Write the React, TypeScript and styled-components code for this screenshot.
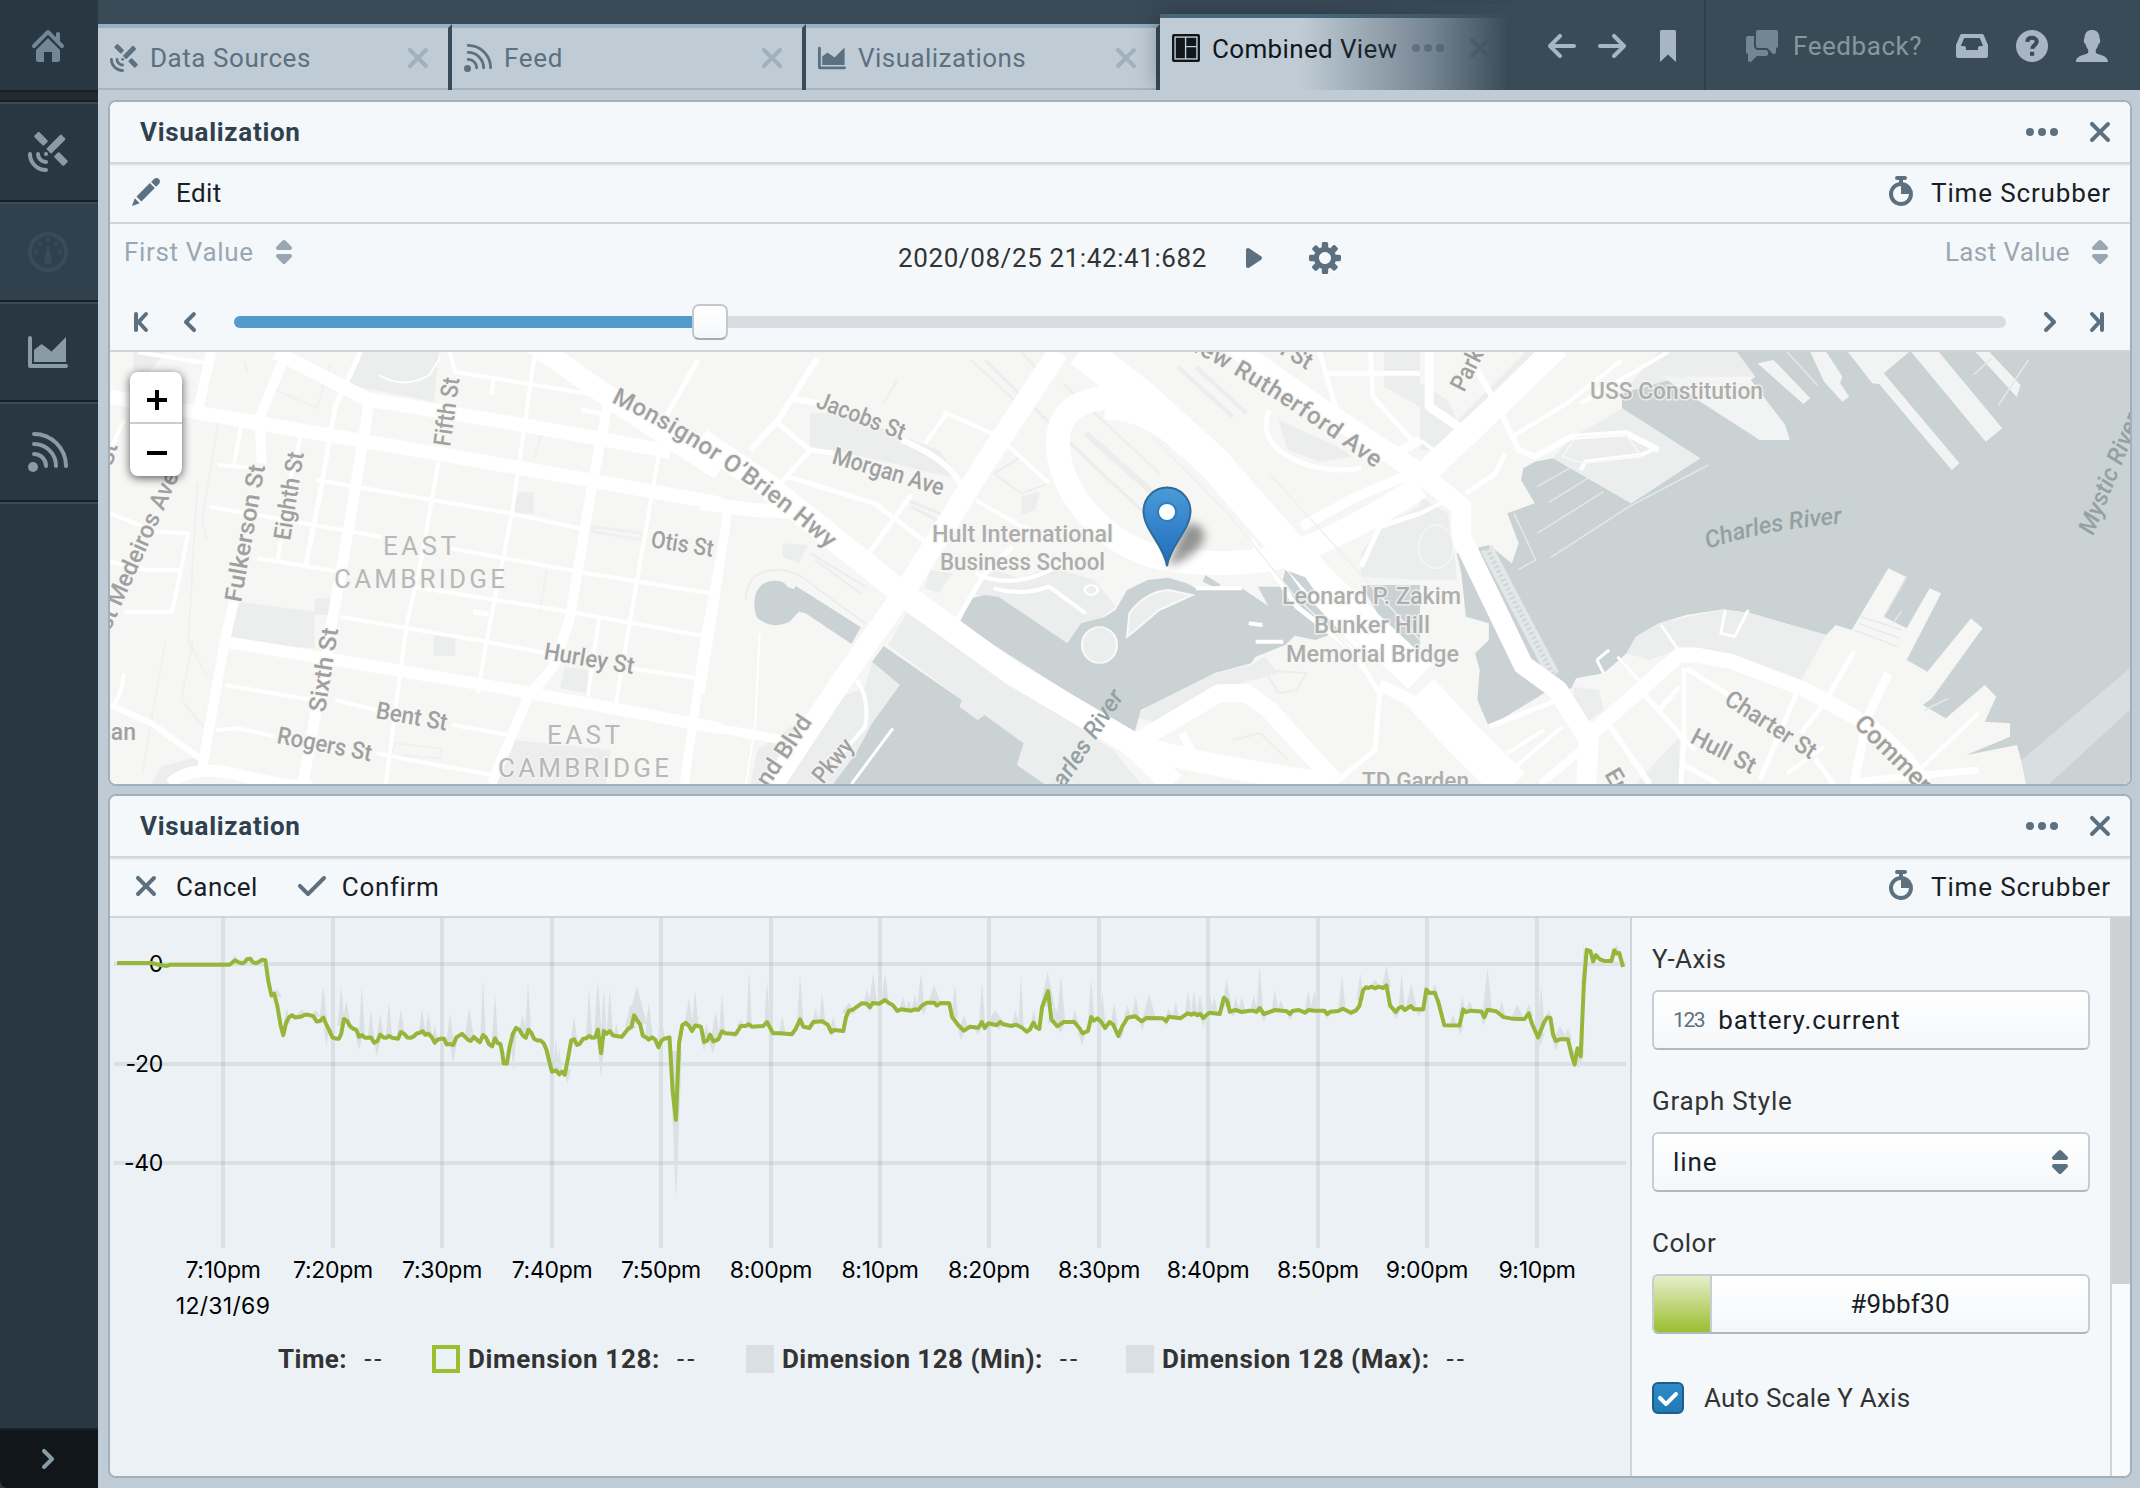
import React from 'react';
import styled, { createGlobalStyle, css } from 'styled-components';

const GlobalStyle = createGlobalStyle`
  * { box-sizing: border-box; }
  body {
    margin: 0;
    background: #bfccd6;
    font-family: Roboto, "Liberation Sans", sans-serif;
    font-size: 26px;
    line-height: 30px;
    color: #182026;
  }
`;

/* ---------- icons ---------- */

const Svg = styled.svg<{ $size?: number; $color?: string; $opacity?: number }>`
  display: block;
  flex: none;
  width: ${p => p.$size ?? 32}px;
  height: ${p => p.$size ?? 32}px;
  color: ${p => p.$color ?? '#5c7080'};
  fill: currentColor;
  opacity: ${p => p.$opacity ?? 1};
  overflow: visible;
`;

type IconName = keyof typeof glyphs;

const stroke = (w: number) => ({
  fill: 'none',
  stroke: 'currentColor',
  strokeWidth: w,
  strokeLinecap: 'round' as const,
  strokeLinejoin: 'round' as const,
});

const glyphs = {
  home: <path d="M2 10v5c0 .55.45 1 1 1h3v-5h4v5h3c.55 0 1-.45 1-1v-5L8 4l-6 6zm13.71-2.71L14 5.59V2c0-.55-.45-1-1-1s-1 .45-1 1v1.59L8.71.29C8.53.11 8.28 0 8 0s-.53.11-.71.29l-7 7a1.003 1.003 0 001.42 1.42L8 2.41l6.29 6.29c.18.18.43.3.71.3a1.003 1.003 0 00.71-1.71z" />,
  cross: <path d="M9.41 8l3.29-3.29c.19-.18.3-.43.3-.71a1.003 1.003 0 00-1.71-.71L8 6.59l-3.29-3.3a1.003 1.003 0 00-1.42 1.42L6.59 8 3.3 11.29c-.19.18-.3.43-.3.71a1.003 1.003 0 001.71.71L8 9.41l3.29 3.29c.18.19.43.3.71.3a1.003 1.003 0 00.71-1.71L9.41 8z" />,
  tick: <path d="M14 3c-.28 0-.53.11-.71.29L6 10.59l-3.29-3.3a1.003 1.003 0 00-1.42 1.42l4 4c.18.18.43.29.71.29s.53-.11.71-.29l8-8A1.003 1.003 0 0014 3z" />,
  caret: <path d="M5 7h6a1.003 1.003 0 00.71-1.71l-3-3C8.53 2.11 8.28 2 8 2s-.53.11-.71.29l-3 3A1.003 1.003 0 005 7zm6 2H5a1.003 1.003 0 00-.71 1.71l3 3c.18.18.43.29.71.29s.53-.11.71-.29l3-3A1.003 1.003 0 0011 9z" />,
  play: <path d="M12 8c0-.35-.19-.64-.46-.82l.01-.02-6-4-.01.02A.969.969 0 005 3c-.55 0-1 .45-1 1v8c0 .55.45 1 1 1 .21 0 .39-.08.54-.18l.01.02 6-4-.01-.02c.27-.18.46-.47.46-.82z" />,
  cog: <path d="M15.19 6.39h-1.85c-.11-.37-.27-.71-.45-1.04l1.36-1.36c.31-.31.31-.82 0-1.13l-1.13-1.13c-.31-.31-.82-.31-1.13 0l-1.36 1.36c-.33-.17-.67-.33-1.04-.44V.79c0-.44-.36-.8-.8-.8h-1.6c-.44 0-.8.36-.8.8v1.86c-.39.12-.75.28-1.1.47l-1.3-1.3c-.3-.3-.79-.3-1.09 0L1.82 2.91c-.3.3-.3.79 0 1.09l1.3 1.3c-.2.34-.36.7-.48 1.09H.79c-.44 0-.8.36-.8.8v1.6c0 .44.36.8.8.8h1.85c.11.37.27.71.45 1.04l-1.36 1.36c-.31.31-.31.82 0 1.13l1.13 1.13c.31.31.82.31 1.13 0l1.36-1.36c.33.18.67.33 1.04.44v1.86c0 .44.36.8.8.8h1.6c.44 0 .8-.36.8-.8v-1.86c.39-.12.75-.28 1.1-.47l1.3 1.3c.3.3.79.3 1.09 0l1.09-1.09c.3-.3.3-.79 0-1.09l-1.3-1.3c.19-.35.36-.71.48-1.1h1.85c.44 0 .8-.36.8-.8v-1.6a.816.816 0 00-.81-.79zm-7.2 4.6c-1.66 0-3-1.34-3-3s1.34-3 3-3 3 1.34 3 3-1.34 3-3 3z" />,
  left: <path d="M7.41 8l3.29-3.29A1.003 1.003 0 009.29 3.29l-4 4c-.18.18-.29.43-.29.71s.11.53.29.71l4 4a1.003 1.003 0 001.42-1.42L7.41 8z" />,
  right: <path d="M10.71 7.29l-4-4a1.003 1.003 0 00-1.42 1.42L8.59 8 5.3 11.29c-.19.18-.3.43-.3.71a1.003 1.003 0 001.71.71l4-4c.18-.18.29-.43.29-.71 0-.28-.11-.53-.29-.71z" />,
  first: <g {...stroke(2)}><path d="M6 4v8" /><path d="M11 4L7.300 8 11 12" /></g>,
  last: <g {...stroke(2)}><path d="M11 4v8" /><path d="M6 4l3.700 4L6 12" /></g>,
  more: <g><circle cx="2" cy="8" r="2" /><circle cx="8" cy="8" r="2" /><circle cx="14" cy="8" r="2" /></g>,
  stopwatch: <path d="M9 2v1.083A6.002 6.002 0 018 15 6 6 0 017 3.083V2H6a1 1 0 110-2h4a1 1 0 010 2H9zM8 5a4 4 0 104 4H8V5z" />,
  edit: <path d="M3.25 10.26l2.47 2.47 6.69-6.69-2.46-2.48-6.7 6.7zM.99 14.99l3.86-1.39-2.46-2.44L.99 14.99zm12.25-14c-.48 0-.92.2-1.24.51l-1.44 1.44 2.47 2.47 1.44-1.44c.32-.32.51-.75.51-1.24.01-.95-.77-1.74-1.74-1.74z" />,
  arrowLeft: <path d="M13.99 6.99H4.41L7.7 3.7a1.003 1.003 0 00-1.42-1.42l-5 5a1.014 1.014 0 000 1.42l5 5a1.003 1.003 0 001.42-1.42L4.41 8.99H14c.55 0 1-.45 1-1s-.46-1-1.01-1z" />,
  arrowRight: <path transform="matrix(-1 0 0 1 16 0)" d="M13.99 6.99H4.41L7.7 3.7a1.003 1.003 0 00-1.42-1.42l-5 5a1.014 1.014 0 000 1.42l5 5a1.003 1.003 0 001.42-1.42L4.41 8.99H14c.55 0 1-.45 1-1s-.46-1-1.01-1z" />,
  bookmark: <path d="M11.2.01H4.8c-.44 0-.8.34-.8.78v15.22l4-3.7 4 3.7V.79c0-.43-.36-.78-.8-.78z" />,
  chat: <path d="M6 10c-1.1 0-2-.9-2-2V3H1c-.55 0-1 .45-1 1v7c0 .55.45 1 1 1v3c0 .55.45 1 1 1 .28 0 .53-.11.71-.29L5.41 13H10c.55 0 1-.45 1-1v-1.17l-.83-.83H6zm9-10H6c-.55 0-1 .45-1 1v7c0 .55.45 1 1 1h4.59l2.7 2.71c.19.18.44.29.71.29.55 0 1-.45 1-1V9c.55 0 1-.45 1-1V1c0-.55-.45-1-1-1z" />,
  inbox: <path d="M13.91 2.6c-.16-.36-.51-.61-.92-.61h-10c-.41 0-.77.25-.92.61L-.01 7.45v5.54c0 .55.45 1 1 1h14c.55 0 1-.45 1-1V7.45L13.91 2.6zM11.99 8c-.55 0-1 .45-1 1v1h-6V9c0-.55-.45-1-1-1H2.4l1.71-4h7.76l1.71 4h-1.59z" />,
  help: (
    <g>
      <circle cx="8" cy="8" r="8" />
      <path d="M5.6 5.9C5.7 4.6 6.7 3.9 8 3.9s2.4.7 2.4 1.9c0 1.7-2.2 1.8-2.3 3.6" fill="none" stroke="#394b59" strokeWidth="2" />
      <rect x="7" y="10.9" width="2.1" height="2" fill="#394b59" />
    </g>
  ),
  person: <path d="M8 0C5.9 0 4.5 1.3 4.3 3.4c0 .9-.5 1.3-.4 2.3.1.8.6 1 .9 1.5.3 1.2.8 2 1.3 2.7v1.4C5.700 12.600 0 12.300 0 16h16c0-3.700-5.700-3.400-6.100-4.700V9.900c.5-.7 1-1.500 1.300-2.700.3-.5.8-.7.9-1.500.1-1-.4-1.400-.4-2.300C11.500 1.300 10.100 0 8 0z" />,
};

const glyphs20 = {
  satellite: (
    <g>
      <rect x="3.1" y="1.6" width="6.8" height="3.5" rx=".6" transform="rotate(45 6.5 3.350)" />
      <rect x="8.8" y="4.25" width="10.4" height="3.5" rx=".6" transform="rotate(-45 14 6)" />
      <rect x="13.100" y="11.750" width="6.800" height="3.500" rx=".6" transform="rotate(45 16.500 13.500)" />
      <circle cx="9" cy="11" r="1" />
      <g {...stroke(2)}>
        <path d="M1 11a8 8 0 008 8" />
        <path d="M5 11a4 4 0 004 4" />
      </g>
    </g>
  ),
  gauge: (
    <g>
      <circle cx="10" cy="10" r="9" fill="none" stroke="currentColor" strokeWidth="2" />
      <path d="M10 6l-1.900 7.600a2 2 0 103.800 0z" />
      <circle cx="4" cy="10" r="1" />
      <circle cx="6" cy="6" r="1" />
      <circle cx="10" cy="4" r="1" />
      <circle cx="14" cy="6" r="1" />
      <circle cx="16" cy="10" r="1" />
    </g>
  ),
  area: (
    <g>
      <path d="M1 3v14h18" {...stroke(2)} />
      <path d="M3 15V9l3.800-3 5 3.700L19 2.500V15z" />
    </g>
  ),
  feed: (
    <g>
      <circle cx="2.500" cy="17.500" r="2.500" />
      <g {...stroke(2)}>
        <path d="M3 1a16 16 0 0116 16" />
        <path d="M3 6a11 11 0 0111 11" />
        <path d="M3 11a6 6 0 016 6" />
      </g>
    </g>
  ),
  layout: (
    <g>
      <rect width="20" height="20" rx="1.400" />
      <rect x="2.200" y="2.200" width="15.600" height="15.600" fill="none" stroke="#bfccd6" strokeWidth="1" />
      <path d="M9.700 2.200v15.600M9.700 9h8" fill="none" stroke="#bfccd6" strokeWidth="1" />
    </g>
  ),
};

interface IconProps {
  name: IconName;
  color?: string;
  size?: number;
  opacity?: number;
}
const Icon = ({ name, color, size, opacity }: IconProps) => (
  <Svg viewBox="0 0 16 16" $color={color} $size={size} $opacity={opacity}>{glyphs[name]}</Svg>
);
const NavIcon = ({ name, color, size = 40 }: { name: keyof typeof glyphs20; color?: string; size?: number }) => (
  <Svg viewBox="0 0 20 20" $color={color} $size={size}>{glyphs20[name]}</Svg>
);

/* ---------- frame ---------- */

const Frame = styled.div`
  display: flex;
  width: 2140px;
  height: 1488px;
  overflow: hidden;
`;

const Sidebar = styled.nav`
  display: flex;
  flex-direction: column;
  flex: none;
  width: 98px;
  background: #293742;
`;

const HomeCell = styled.div`
  display: flex;
  align-items: center;
  justify-content: center;
  height: 90px;
  padding-top: 2px;
  padding-right: 2px;
`;

const SidebarGap = styled.div`
  height: 12px;
  background: #202b33;
  border-top: 2px solid #182026;
  border-bottom: 2px solid #182026;
`;

const NavCell = styled.div<{ $active?: boolean }>`
  display: flex;
  align-items: center;
  justify-content: center;
  height: 100px;
  padding-right: 2px;
  border-top: 2px solid #394b59;
  border-bottom: 2px solid #182026;
  background: ${p => (p.$active ? '#30404d' : 'transparent')};
`;

const NavEnd = styled.div`
  height: 2px;
  background: #394b59;
`;

const Expand = styled.div`
  display: flex;
  align-items: center;
  justify-content: center;
  margin-top: auto;
  height: 60px;
  padding-right: 2px;
  border-top: 2px solid #182026;
  background: #10161a;
  border-bottom-left-radius: 8px;
`;

const Main = styled.div`
  display: flex;
  flex-direction: column;
  width: 2042px;
`;

const TopBar = styled.header`
  display: flex;
  align-items: flex-end;
  height: 90px;
  overflow: hidden;
  background: #3a4b58;
`;

const Label = styled.span<{ $ls?: number; $w?: number; $color?: string }>`
  letter-spacing: ${p => p.$ls ?? 0.45}px;
  font-weight: ${p => p.$w ?? 400};
  color: ${p => p.$color ?? '#182026'};
  white-space: nowrap;
`;

const Tab = styled.div`
  display: flex;
  align-items: center;
  gap: 12px;
  flex: none;
  width: 354px;
  height: 66px;
  padding: 0 14px 2px 12px;
  border-top: 4px solid #97b0c6;
  border-right: 4px solid #394b59;
  background: #bfccd6;
  box-shadow: inset 0 -2px 0 #a6b5c2;
  svg:last-child { margin-left: auto; }
`;

const ActiveTab = styled.div`
  display: flex;
  align-items: flex-start;
  position: relative;
  flex: none;
  width: 346px;
  height: 76px;
  padding: 16px 0 0 12px;
  border-top: 4px solid #48677b;
  background: #bfccd6;
  box-shadow: 0 0 24px rgba(16, 22, 26, 0.4);
  &::after {
    content: '';
    position: absolute;
    inset: -14px -30px 0 140px;
    background: linear-gradient(90deg, rgba(57, 75, 89, 0) 0, rgba(57, 75, 89, 0.55) 55%, #3a4b58 208px);
  }
`;

const ActiveTabTitle = styled.div`
  padding: 0 15px 0 12px;
`;

const ActiveTabActions = styled.div`
  display: flex;
  align-items: center;
  gap: 20px;
  margin-top: -2px;
`;

const TopActions = styled.div`
  display: flex;
  align-items: center;
  align-self: stretch;
  padding-top: 2px;
`;

const HistoryActions = styled(TopActions)`
  position: relative;
  gap: 18px;
  margin-left: 40px;
  padding-right: 20px;
  border-right: 2px solid #303f4b;
  svg:last-child { margin-left: 6px; }
`;

const UserActions = styled(TopActions)`
  gap: 28px;
  padding-left: 40px;
  padding-right: 32px;
`;

const Feedback = styled.div`
  display: flex;
  align-items: center;
  gap: 15px;
  width: 182px;
`;

/* ---------- panels ---------- */

const Panels = styled.main`
  display: flex;
  flex-direction: column;
  gap: 8px;
  padding: 10px 8px 10px 10px;
`;

const Panel = styled.section<{ $h: number }>`
  display: flex;
  flex-direction: column;
  height: ${p => p.$h}px;
  border: 2px solid #a2b0bc;
  border-radius: 8px;
  overflow: hidden;
  background: #f5f8fa;
`;

const PanelHeader = styled.div`
  display: flex;
  align-items: center;
  justify-content: space-between;
  flex: none;
  height: 62px;
  padding: 0 14px 0 30px;
  background: #f4f8fb;
  border-bottom: 2px solid #d0d6da;
  box-shadow: 0 1px 2px rgba(16, 22, 26, 0.12);
  z-index: 1;
`;

const Toolbar = styled.div`
  display: flex;
  align-items: center;
  flex: none;
  height: 60px;
  padding: 0 19px 2px 20px;
  background: #f4f8fb;
  border-bottom: 2px solid #d0d5d9;
`;

const ToolButton = styled.div<{ $end?: boolean }>`
  display: flex;
  align-items: center;
  gap: 14px;
  margin-right: ${p => (p.$end ? 0 : 38)}px;
  margin-left: ${p => (p.$end ? 'auto' : 0)};
  span { padding-top: 2px; }
`;

const Group = styled.div<{ $gap: number }>`
  display: flex;
  align-items: center;
  gap: ${p => p.$gap}px;
`;

const Scrubber = styled.div`
  display: flex;
  flex-direction: column;
  flex: none;
  height: 128px;
  padding: 12px 14px 8px;
  background: #f4f8fb;
  border-bottom: 2px solid #d0d5d9;
`;

const ScrubberTop = styled.div`
  display: grid;
  grid-template-columns: 774px auto 1fr;
  align-items: start;
`;

const ScrubberEnd = styled(Group)`
  justify-content: flex-end;
`;

const Clock = styled(Group)`
  padding-top: 6px;
  svg:last-child { margin-left: 8px; }
`;

const ScrubberTrack = styled.div`
  display: flex;
  align-items: center;
  height: 36px;
  margin-top: 30px;
`;

const Track = styled.div`
  display: flex;
  align-items: center;
  flex: none;
  width: 1772px;
  height: 12px;
  margin: 0 28px 0 28px;
  border-radius: 6px;
  background: #d8dce0;
`;

const TrackFill = styled.div`
  width: 458px;
  height: 12px;
  border-radius: 6px 0 0 6px;
  background: #539bcd;
`;

const Handle = styled.div`
  width: 36px;
  height: 36px;
  border-radius: 7px;
  border: 2px solid #c2c8cc;
  border-bottom-color: #a5abb0;
  background: linear-gradient(#fff, #f5f7f9);
`;

/* ---------- map ---------- */

const MapBox = styled.div`
  position: relative;
  flex: 1;
  overflow: hidden;
`;

const MapCanvas = styled.svg`
  display: block;
  width: 2020px;
  height: 432px;
  background: #f6f6f4;
  path, line { vector-effect: non-scaling-stroke; }
`;

const ZoomControl = styled.div`
  position: absolute;
  left: 20px;
  top: 20px;
  display: flex;
  flex-direction: column;
  width: 52px;
  height: 104px;
  border-radius: 8px;
  background: #fff;
  box-shadow: 0 2px 10px rgba(0, 0, 0, 0.65);
`;

const ZoomButton = styled.div<{ $divided?: boolean }>`
  display: flex;
  align-items: center;
  justify-content: center;
  height: 52px;
  padding: 6px 0 0 2px;
  ${p => p.$divided && css`border-bottom: 2px solid #ccc;`}
`;

const WATER = '#cad2d3';
const PARK = '#eceeed';
const PIER = '#f1f4f3';

type Road = [string, number];

const westParks = [
  'M850 36H955L945 185 760 135 785 36z',
  'M520 785L685 815V925L500 905z',
  'M945 885H992V948H945z',
  'M1120 457H1162V520H1120z',
  'M1120 1200L1330 1230 1320 1332H1080z',
  'M1230 980L1280 990V1060L1220 1045z',
  'M330 1332L350 1280 430 1250 445 1285 370 1332z',
  'M290 36H360L325 95H290z',
  'M685 775H720V825H685z',
];
const westRoads: Road[] = [
  ['M240 170L430 218 1000 352 1568 490', 14],
  ['M600 36L800 178 1140 255 1460 335', 14],
  ['M1150 0L1340 185 1568 390', 21],
  ['M620 50L565 235 570 370', 10],
  ['M460 36L430 218', 10],
  ['M805 178L760 560 720 870 660 1332', 11],
  ['M510 780L490 900 440 1285', 10],
  ['M500 908L860 990 1160 1060 1568 1165', 12],
  ['M1325 185L1290 430 1240 840 1205 980 1150 1070 1070 1332', 10],
  ['M1568 660L1535 900 1490 1332', 9],
  ['M370 1332Q420 1270 520 1305T680 1340', 12],
  ['M475 375L560 385M690 420L1110 520 1280 570', 4],
  ['M455 500L830 590M980 625L1260 695 1568 765', 4],
  ['M560 655L740 695M900 740L1240 815 1540 890', 4],
  ['M740 830L1060 905 1190 940M1370 985L1520 1015', 4],
  ['M490 1035L680 1080M730 1080L820 1110M985 1155L1110 1185', 4],
  ['M470 1170L520 1165 600 1190M820 1240L970 1280 1075 1305', 4],
  ['M955 365L920 640 885 860 840 1332', 4],
  ['M1165 40L1115 520 1060 900 1040 1060', 4],
  ['M785 36L730 200 700 440 665 680', 5],
  ['M655 290L630 430 605 660', 4],
  ['M1435 340L1390 700 1340 1100', 4],
  ['M1305 835L1280 1070', 4],
  ['M525 260L510 370', 4],
  ['M980 36L990 95 1340 175M1075 115L1070 165', 4],
  ['M240 520L340 575 410 580 375 815H270', 4],
  ['M240 665L320 690H390', 4],
  ['M240 1095L330 1150 440 1260', 6],
  ['M1520 60L1450 230', 5],
  ['M300 36L450 70', 4],
  ['M270 240L240 330M270 1000Q265 1060 250 1090', 4],
  ['M1265 210L1330 225M1030 815L1065 822', 5],
  ['M825 105Q880 150 935 105L960 50', 2],
];
const westRails: Road[] = [
  ['M480 210L440 540 450 600M430 430L410 900 450 1010', 2],
  ['M360 905L310 1300M420 900L395 1080 450 1170', 2],
  ['M600 150L690 205 720 70M530 60L540 100', 2],
  ['M1180 280L1165 350M1190 690L1175 820', 2],
  ['M860 1210L960 1225V1255L850 1245z', 2],
  ['M1290 560L1400 580V600L1290 575z', 3],
];

const midParks = [
  'M240 220H330L420 280 520 330 570 420 450 380 320 340 240 320z',
  'M450 820L900 1230 960 1332H740L690 1275 705 1210 620 1125 605 1140 565 1100 570 1080 410 915z',
  'M600 740L640 690 700 715 760 680 860 720 905 800 800 910 650 770 600 765z',
  'M1260 240L1390 320 1420 350 1350 365 1280 330z',
  'M1440 640L1480 560 1568 500V720L1440 710z',
  'M700 470L740 455 730 510 700 525z',
  'M180 610L235 615 215 670 180 650z',
  'M500 690L550 700 520 760 490 745z',
  'M110 1332L125 1230 260 1100 360 1040 375 965 435 1035 340 1240 290 1332z',
  'M1490 36H1568V200L1490 140z',
  'M945 1130Q1060 1010 1200 975L1230 950 1260 1000 1120 1050 1000 1150z',
];
const midWater = [
  'M118 790Q120 722 165 722 185 722 190 740L205 748 208 738 240 765 350 862 330 912 230 820 215 815 195 845Q160 870 125 835 118 815 118 790z',
  'M400 918L570 1080 565 1100 605 1140 620 1125 705 1210 690 1275 750 1332H290L340 1240 375 1150 435 1035 375 965z',
  'M565 850L590 775 620 765 650 770 800 910 830 850 880 832 905 810 930 750 975 720 1020 713 1060 730 1080 745H1180L1240 800 1300 880 1275 915 1210 950 1200 970 1120 1000 960 1110 945 1185 840 1090z',
  'M1215 740H1265L1275 690 1320 715 1400 850 1568 930V735H1440L1480 830 1420 860 1340 900 1270 880z',
  'M1155 470L1185 510 1230 590 1210 585 1170 520z',
  'M1100 705L1135 735 1120 742 1095 725z',
];
const midRoads: Road[] = [
  ['M900 170C800 180 775 240 780 330 790 470 880 600 980 645 1050 675 1180 675 1250 655 1350 620 1470 530 1568 440', 24],
  ['M880 205Q960 195 1060 310', 24],
  ['M830 30L960 170 1120 370 1240 560 1360 740 1568 1010', 34],
  ['M780 36L620 370 450 745 300 1040 160 1332', 21],
  ['M0 300L130 420 450 770 680 1000 940 1210 1030 1332', 24],
  ['M0 490L120 510 200 515', 14],
  ['M1140 0L1380 230 1568 400', 20],
  ['M60 515L30 800 0 1060', 9],
  ['M0 1155L180 1200', 9],
  ['M940 1215L1130 1060H1190L1240 1110 1380 1320', 18],
  ['M930 1210Q1100 1280 1380 1332', 22],
  ['M1050 1180L1070 1230', 8],
  ['M1568 390L1430 470 1310 560', 10],
  ['M1200 600L1300 800 1420 930 1480 1060 1470 1230 1380 1332', 5],
  ['M960 180L1150 430 1310 740 1440 930', 5],
  ['M1480 1035L1568 1095', 12],
  ['M1568 300L1530 330 1510 350', 9],
  ['M255 55L170 240 110 330M200 175L260 190M440 300Q560 370 575 460', 6],
  ['M165 245L240 330 170 440M190 410L380 490 500 615', 5],
  ['M460 465L360 655M240 330L290 340', 5],
  ['M600 480L700 560 730 570M540 215L490 310M530 215L650 290 760 430', 4],
  ['M560 840L620 700 680 620', 5],
  ['M600 700Q690 760 800 660M640 745Q700 770 760 740L840 820', 4],
  ['M130 880L120 1160 100 1332', 2],
  ['M340 1020Q370 1070 360 1160L290 1270', 4],
  ['M1460 36L1465 170 1550 300M1350 36L1390 230M1370 100H1568', 5],
  ['M1240 210C1200 330 1330 410 1440 385 1500 370 1568 330M1250 200L1200 370', 5],
  ['M1568 520L1480 560 1440 680', 5],
  ['M420 1165L330 1332', 3],
  ['M1210 905H1270M1080 745H1180M1195 850L1225 855', 4],
];
const midRails: Road[] = [
  ['M620 60L860 380 1000 560', 3],
  ['M840 280L1020 500', 6],
  ['M790 130L1000 400M700 36L760 130', 2],
  ['M1040 80L1160 230M1080 80L1190 220', 4],
  ['M100 780Q100 690 170 690 210 690 250 740L360 850', 2],
  ['M590 60L700 200M430 120L400 190', 2],
  ['M450 480L540 530M460 500L530 550', 3],
  ['M640 400L700 350 760 430 700 460z', 2],
  ['M240 640L360 740M250 660L350 760', 2],
  ['M1230 990L1320 1000 1300 1050 1260 1060z', 2],
  ['M1160 1200L1220 1180 1280 1260', 2],
];

const eastWater = [
  'M90 700L80 640 150 615 200 670 215 610 190 520 250 490 220 420 225 385 250 365 290 355 460 490 610 355 440 205V160L520 105 570 110 740 300H805L795 255 720 120 730 110 690 36H1546V1332H1320L1310 1265 1300 1215 1190 1245 1285 1190V1150L1230 1145 1255 1070 1230 1035 1145 1135 1095 1095 1115 1075 1225 865 1200 835 1105 995 1060 960 1135 760 1110 745 1060 865 1010 830 1058 710 1020 685 940 870 905 855 885 885 720 820 660 808 580 825 520 850 470 890 450 940 400 1000 340 1015 330 1045 270 1060 150 1160 125 1080 130 990 120 940 150 900V850L100 830z',
];
const eastLand = [
  'M735 70L770 60 850 175 835 192z',
  'M850 36H885L920 110 915 130 935 170 920 185 880 125z',
  'M932 36H1065L1010 100 1175 370 1158 390 1000 132 985 130z',
  'M1070 36H1130L1268 265 1232 305z',
  'M1210 36H1240L1308 135 1300 172z',
  'M520 105L560 110 690 130 720 120 795 255 805 300H740z',
];
const eastParks = [
  'M290 355L460 490 610 355 440 205 400 240 330 290z',
  'M450 940L470 890 520 850 660 808 720 820 885 885 830 1020 600 925 560 930 500 960z',
  'M520 36H690L730 110 570 110 440 160z',
  'M335 1040L390 1050 400 1110 365 1145 335 1100z',
  'M60 270L230 36H260L110 270z',
  'M0 470L60 520 75 640 80 720H0z',
  'M470 1332L565 1190V1332z',
  'M0 130L60 180 90 270 40 330H0z',
];
const eastRoads: Road[] = [
  ['M300 20L180 180 10 400', 24],
  ['M0 400L90 500V590L225 975 300 1050 368 1200 362 1332', 20],
  ['M0 1055L90 1190 200 1340', 38],
  ['M365 1190L565 945H600L680 965 840 1050 945 1130', 15],
  ['M945 1130Q1040 1200 1100 1332', 14],
  ['M410 1150L500 1332', 6],
  ['M20 36V200L100 275', 9],
  ['M120 80L170 200 215 330 250 350 330 290 450 280 520 330', 6],
  ['M185 340L165 400 100 460', 5],
  ['M440 60L320 190 200 290M540 36L350 190', 4],
  ['M575 985V1190L568 1332', 5],
  ['M820 1060L740 1320', 5],
  ['M945 935L880 1090 830 1180', 5],
  ['M1020 1000L975 1130 945 1332', 9],
  ['M480 1050L565 1180M565 1040L520 1110', 5],
  ['M580 985L690 1080M860 1255L900 1332', 5],
  ['M568 1270L650 1332M600 1230L560 1180', 5],
  ['M200 1290L310 1160M190 1240L270 1170', 4],
  ['M365 1215L262 1332', 8],
  ['M945 1325L1215 1290', 7],
  ['M1095 1280L1215 1120', 4],
  ['M800 1300L880 1220', 4],
  ['M525 855L565 935M665 810L655 880 685 890 715 810', 3],
  ['M430 950L490 1040', 3],
  ['M350 390L360 365 480 345 515 325', 4],
  ['M385 960L412 930M385 960L400 1000', 3],
  ['M0 300L30 330M0 520L60 480', 4],
  ['M300 1080L150 1160', 5],
  ['M200 1330L0 1070', 30],
];
const docks: Road[] = [
  ['M255 440L325 385M280 488L365 415M255 580L400 455', 1.5],
  ['M285 652L455 500 628 375M205 520L252 660 215 688', 1.5],
  ['M800 36L865 135M1205 105L1245 55M1260 195L1325 60', 1.5],
  ['M1010 830L1060 710M1030 850L1048 815M1100 1110L1150 1075', 1.5],
];

const Roads = ({ items, color = '#fff' }: { items: Road[]; color?: string }) => (
  <g fill="none" stroke={color} strokeLinejoin="round">
    {items.map(([d, w], i) => <path key={i} d={d} strokeWidth={w} />)}
  </g>
);
const Areas = ({ items, color }: { items: string[]; color: string }) => (
  <g fill={color}>{items.map((d, i) => <path key={i} d={d} />)}</g>
);

const MapText = styled.text<{ $size?: number; $tone?: string; $italic?: boolean; $light?: boolean }>`
  font-size: ${p => p.$size ?? 24}px;
  font-weight: ${p => (p.$light ? 400 : 500)};
  font-style: ${p => (p.$italic ? 'italic' : 'normal')};
  fill: ${p => p.$tone ?? '#a0a0a0'};
  stroke: rgba(246, 246, 244, 0.75);
  stroke-width: ${p => (p.$italic ? 0 : 3)}px;
  paint-order: stroke;
`;

interface Street { t: string; x: number; y: number; a: number; w: number; s?: number }
const streets: Street[] = [
  { t: 'Fulkerson St', x: 241, y: 603, a: -80, w: 139 },
  { t: 'Eighth St', x: 290, y: 541, a: -81, w: 89 },
  { t: 'Fifth St', x: 450, y: 447, a: -82, w: 69 },
  { t: 'Sixth St', x: 325, y: 713, a: -81, w: 85 },
  { t: 'st Medeiros Ave', x: 110, y: 631, a: -66, w: 170 },
  { t: 'St', x: 112, y: 467, a: -75, w: 22 },
  { t: 'Otis St', x: 650, y: 547, a: 9, w: 63 },
  { t: 'Hurley St', x: 543, y: 659, a: 9.5, w: 91 },
  { t: 'Bent St', x: 375, y: 718, a: 10, w: 72 },
  { t: 'Rogers St', x: 276, y: 743, a: 11, w: 96 },
  { t: 'ian', x: 105, y: 740, a: 0, w: 31 },
  { t: 'Jacobs St', x: 815, y: 407, a: 21, w: 93 },
  { t: 'Morgan Ave', x: 831, y: 463, a: 16.5, w: 115 },
  { t: 'Main St', x: 1240, y: 330, a: 31, w: 78 },
  { t: 'Park', x: 1464, y: 393, a: -63, w: 44 },
  { t: 'nd Blvd', x: 768, y: 788, a: -56, w: 80 },
  { t: 'Pkwy', x: 823, y: 785, a: -50, w: 50 },
  { t: 'Charter St', x: 1723, y: 703, a: 33, w: 104 },
  { t: 'Hull St', x: 1689, y: 742, a: 27.5, w: 70 },
  { t: 'Commercial St', x: 1853, y: 725, a: 45, w: 166, s: 25 },
  { t: 'Endicott St', x: 1604, y: 774, a: 60, w: 116 },
];
const places: Street[] = [
  { t: 'USS Constitution', x: 1590, y: 399, a: 0, w: 173 },
  { t: 'Hult International', x: 932, y: 542, a: 0, w: 181 },
  { t: 'Business School', x: 940, y: 570, a: 0, w: 165 },
  { t: 'Leonard P. Zakim', x: 1282, y: 604, a: 0, w: 179 },
  { t: 'Bunker Hill', x: 1314, y: 633, a: 0, w: 116 },
  { t: 'Memorial Bridge', x: 1286, y: 662, a: 0, w: 173 },
  { t: 'TD Garden', x: 1362, y: 789, a: 0, w: 107 },
];
const districts: Street[] = [
  { t: 'EAST', x: 383, y: 555, a: 0, w: 73 },
  { t: 'CAMBRIDGE', x: 334, y: 588, a: 0, w: 171 },
  { t: 'EAST', x: 547, y: 744, a: 0, w: 73 },
  { t: 'CAMBRIDGE', x: 498, y: 777, a: 0, w: 171 },
];

const City = () => (
  <MapCanvas viewBox="110 352 2020 432">
    <defs>
      <linearGradient id="pin" x1="0" y1="0" x2="0" y2="1">
        <stop offset="0" stopColor="#4a9bd6" />
        <stop offset="1" stopColor="#1f6cbf" />
      </linearGradient>
      <filter id="soft" x="-50%" y="-50%" width="200%" height="200%"><feGaussianBlur stdDeviation="5" /></filter>
      <path id="obrien" d="M611 402Q727 458 836 556" />
      <path id="rutherford" d="M1183 346Q1280 397 1382 474" />
      <path id="charles" d="M1708 549Q1764 529 1850 523" />
    </defs>
    <g transform="translate(0 340) scale(.45918 .33333)">
      <Areas items={westParks} color={PARK} />
      <Roads items={westRails} color="#eff1f0" />
      <Roads items={westRoads} />
    </g>
    <g transform="translate(700 340) scale(.45918 .33333)">
      <Areas items={midParks} color={PARK} />
      <Areas items={midWater} color={WATER} />
      <path d="M930 890L935 820Q970 755 1020 750L1072 765 1000 810 940 880z" fill={PARK} stroke="#f9f9f8" strokeWidth="2" />
      <ellipse cx="870" cy="915" rx="38" ry="54" fill={PARK} stroke="#f9f9f8" strokeWidth="5" />
      <Roads items={midRails} color={PARK} />
    </g>
    <g transform="translate(1420 340) scale(.45918 .33333)">
      <Areas items={eastWater} color={WATER} />
      <Areas items={eastParks} color={PARK} />
      <Areas items={eastLand} color={PIER} />
      <path d="M1310 1260L1546 985V1110L1370 1332H1320z" fill="#d9dfe0" />
      <Roads items={docks} color="#e3e8e8" />
      <path d="M145 625L290 1005" stroke="#e2e7e7" strokeWidth="13" fill="none" />
      <path d="M145 625L290 1005" stroke="#cdd5d6" strokeWidth="5" strokeDasharray="2 3" fill="none" />
      <path d="M960 830L1050 870M955 850L1045 895M945 870L1040 920" stroke="#e6ebea" strokeWidth="1.5" fill="none" />
      <Roads items={eastRoads} />
      <path d="M310 350L340 290 450 285 480 345 355 370z" fill="none" stroke="#f7f8f7" strokeWidth="1.5" />
      <ellipse cx="35" cy="620" rx="38" ry="65" fill={PARK} stroke="#fff" strokeWidth="2" />
    </g>
    <g transform="translate(700 340) scale(.45918 .33333)">
      <Roads items={midRoads} />
      <Roads items={[['M985 290L1150 520 1290 760 1440 960', 1.5], ['M1240 400L1568 900', 1.5]]} color="#eef1f0" />
      <path d="M1280 692L1318 712 1345 765 1325 760z" fill={WATER} />
      <circle cx="852" cy="750" r="14" fill={PARK} stroke="#fff" strokeWidth="6" />
    </g>

    {streets.map((s, i) => (
      <MapText key={i} $size={s.s} textLength={s.w} lengthAdjust="spacingAndGlyphs" transform={`translate(${s.x} ${s.y}) rotate(${s.a})`}>{s.t}</MapText>
    ))}
    {places.map((s, i) => (
      <MapText key={i} $tone="#adadad" textLength={s.w} lengthAdjust="spacingAndGlyphs" x={s.x} y={s.y}>{s.t}</MapText>
    ))}
    {districts.map((s, i) => (
      <MapText key={i} $size={26} $light $tone="#b8b8b8" textLength={s.w} x={s.x} y={s.y}>{s.t}</MapText>
    ))}
    <MapText><textPath href="#obrien" textLength="263">Monsignor O’Brien Hwy</textPath></MapText>
    <MapText><textPath href="#rutherford" textLength="228">New Rutherford Ave</textPath></MapText>
    <MapText $italic $tone="#93a1a3"><textPath href="#charles" textLength="137">Charles River</textPath></MapText>
    <MapText $italic $tone="#93a1a3" textLength="138" transform="translate(1049 812) rotate(-57)">Charles River</MapText>
    <MapText $italic $tone="#93a1a3" textLength="128" transform="translate(2093 536) rotate(-68)">Mystic River</MapText>

    <path d="M1167 566L1186 524Q1206 522 1204 540 1192 560 1167 566z" fill="#000" opacity=".4" filter="url(#soft)" />
    <path d="M1167 566C1164 545 1143.500 530 1143.500 511A23.500 23.500 0 011190.500 511C1190.500 530 1170 545 1167 566z" fill="url(#pin)" stroke="#2e6c97" strokeWidth="2" />
    <circle cx="1167" cy="512" r="9" fill="#fff" stroke="#2e7ebd" strokeWidth="2" />
  </MapCanvas>
);

/* ---------- chart ---------- */

const ChartBody = styled.div`
  display: flex;
  flex: 1;
  min-height: 0;
`;

const ChartPane = styled.div`
  display: flex;
  flex-direction: column;
  width: 1522px;
  flex: none;
  background: #ebf1f5;
  border-right: 2px solid #ced4d9;
`;

const ChartCanvas = styled.svg`
  display: block;
  width: 1520px;
  height: 410px;
  font: 400 23px Inter, "Liberation Sans", sans-serif;
  letter-spacing: -0.3px;
`;

const DateText = styled.text`
  letter-spacing: 0.3px;
`;

const Legend = styled.div`
  display: flex;
  align-items: center;
  height: 62px;
  padding: 0 0 1px 168px;
`;

const LegendItem = styled.div<{ $w: number }>`
  display: flex;
  align-items: center;
  gap: 17px;
  width: ${p => p.$w}px;
`;

const LegendKey = styled.div`
  display: flex;
  align-items: center;
  gap: 8px;
`;

const Swatch = styled.div<{ $line?: boolean }>`
  width: 28px;
  height: 28px;
  background: ${p => (p.$line ? 'transparent' : '#dadfe3')};
  border: ${p => (p.$line ? '4px solid #9bbf30' : '0')};
`;

/* Series samples are kept in three windows, each with its own origin and step. */
interface Window { ox: number; oy: number; sy: number; pts: number[] }
const SX = 0.45918;
const windows: Window[] = [
  {
    ox: 0, oy: 780, sy: 0.45153,
    pts: [255,405,330,405,345,409,362,412,372,409,500,409,512,399,520,404,527,406,532,404,538,397,545,396,551,404,558,406,565,402,571,398,578,399,584,444,591,477,597,473,604,500,611,543,617,565,623,538,629,526,636,521,643,526,650,525,658,523,664,520,672,520,682,523,690,535,698,533,704,526,710,540,717,554,724,570,732,573,738,573,743,562,749,529,756,534,762,545,769,551,776,553,782,569,788,565,795,571,808,570,815,582,822,578,828,564,835,570,841,571,847,567,854,571,867,573,873,558,880,562,887,570,895,571,902,567,908,561,914,560,920,556,926,564,933,562,940,569,947,582,953,575,960,573,967,573,973,586,980,585,987,587,994,570,1000,566,1006,562,1013,569,1019,575,1025,578,1032,569,1038,575,1045,581,1052,565,1058,570,1065,585,1072,590,1078,572,1084,583,1090,585,1094,605,1097,628,1104,628,1110,590,1117,562,1124,549,1131,553,1138,565,1145,571,1151,553,1157,560,1163,573,1170,577,1177,577,1184,583,1190,597,1196,622,1202,646,1211,643,1218,652,1224,646,1230,653,1237,616,1244,577,1250,574,1257,587,1263,584,1270,573,1277,572,1283,567,1289,571,1296,570,1302,553,1309,605,1315,556,1321,562,1328,556,1335,566,1342,567,1354,569,1361,560,1368,551,1375,547,1381,521,1387,531,1394,541,1400,567,1407,570,1413,575,1420,570,1427,575,1434,592,1440,578,1447,573,1458,570,1465,690,1472,753,1479,583,1486,543,1493,538,1500,544,1507,556,1514,544,1521,545],
  },
  {
    ox: 700, oy: 900, sy: 0.33333,
    pts: [2,380,9,426,16,422,22,404,29,424,40,418,48,394,55,400,78,402,89,378,99,378,106,373,113,380,138,378,146,366,159,400,175,400,200,403,208,388,218,358,225,380,238,384,247,366,266,364,278,374,286,396,292,390,312,393,318,352,324,332,332,330,352,310,363,311,370,322,376,309,390,311,403,300,412,310,420,316,430,333,438,328,460,332,468,328,475,330,483,317,494,308,510,308,516,317,524,309,543,310,549,351,562,375,575,392,588,380,606,383,614,366,620,384,628,370,646,376,654,366,660,373,678,378,688,374,700,382,712,395,718,389,726,368,732,382,739,387,745,321,758,273,765,358,778,379,792,366,815,366,826,384,833,400,845,393,852,351,858,362,866,355,874,366,882,384,892,366,900,374,911,408,920,379,931,353,948,349,962,364,972,354,1008,355,1015,364,1021,350,1046,355,1062,340,1070,344,1076,340,1083,346,1089,341,1096,354,1109,338,1132,342,1141,293,1148,302,1154,335,1166,330,1180,336,1196,332,1206,332,1212,336,1219,324,1228,342,1252,330,1278,334,1285,342,1290,333,1304,330,1318,338,1325,330,1338,332,1360,332,1366,342,1373,335,1390,333,1400,326,1418,338,1428,332,1436,318,1444,271,1450,262,1456,264,1463,260,1470,265,1478,260,1488,264,1495,256,1503,317,1515,336,1522,324,1528,320,1535,330,1548,318,1555,328,1566,328],
  },
  {
    ox: 1420, oy: 780, sy: 0.45153,
    pts: [7,508,14,464,20,472,32,471,40,492,53,543,86,544,94,508,100,514,110,511,134,513,140,525,147,509,166,512,182,525,198,528,212,529,228,529,237,517,244,540,257,570,270,537,277,526,284,527,290,565,296,578,306,574,322,574,331,612,337,630,343,594,350,612,357,450,363,376,371,379,377,402,383,388,392,397,403,401,417,401,423,377,428,384,434,383,442,414],
  },
];
const toPoints = (pts: number[], w: Window) => {
  const out: [number, number][] = [];
  for (let i = 0; i < pts.length; i += 2) out.push([w.ox + pts[i] * SX, w.oy + pts[i + 1] * w.sy]);
  return out;
};
const line = windows.flatMap(w => toPoints(w.pts, w));
const linePath = 'M' + line.map(p => p.map(v => v.toFixed(1)).join(' ')).join('L');

/* Min/max excursions: centre x, extreme y, reach on each side, base y. */
const spikes: [number, number, number[]][] = [
  [0, 0, [511,387,8,404, 603,462,12,480, 625,505,8,540, 657,508,14,522, 687,510,12,524, 704,455,8,530, 743,458,8,545, 754,490,10,540, 788,455,7,568, 808,508,7,570, 828,518,8,570, 847,490,7,570, 873,508,9,565, 919,508,8,560, 933,515,8,565, 947,540,6,575, 980,517,8,580, 1022,505,10,572, 1052,442,6,570, 1078,475,7,578, 1138,520,8,560, 1150,448,7,560, 1250,525,8,578, 1283,462,7,570, 1302,440,8,560, 1315,460,6,562, 1328,462,7,560, 1342,540,6,566, 1373,495,12,550, 1387,458,22,540, 1413,493,9,570, 1440,515,8,575, 1500,485,10,545, 1514,465,8,550, 1558,518,10,574, 711,590,6,548, 782,598,8,565, 821,612,8,575, 987,628,8,580, 1118,646,7,560, 1218,590,6,650, 1236,672,8,640, 1309,660,7,590, 1472,935,13,600, 1211,570,6,640, 1533,600,8,570]],
  [700, 1, [14,370,8,420, 35,338,8,420, 48,280,7,400, 89,360,10,378, 107,208,6,378, 146,240,6,372, 179,348,7,400, 218,222,7,370, 252,325,8,370, 266,280,7,364, 290,350,8,390, 324,308,16,340, 364,268,9,312, 377,218,9,312, 403,218,8,305, 442,288,8,330, 455,300,7,330, 468,285,8,330, 481,218,8,320, 510,255,14,310, 555,250,7,352, 575,345,9,385, 614,245,7,376, 643,332,22,372, 687,330,8,376, 699,225,6,380, 727,330,8,376, 757,215,16,320, 772,318,16,370, 786,228,10,366, 816,330,8,370, 852,235,7,360, 876,280,7,370, 902,310,8,375, 931,315,8,353, 949,288,8,350, 978,282,14,352, 1021,325,8,352, 1036,305,7,352, 1063,272,7,342, 1076,272,7,342, 1089,285,8,344, 1109,270,8,340, 1120,290,8,340, 1147,240,11,320, 1167,290,7,332, 1180,288,8,334, 1206,285,8,332, 1219,198,7,328, 1252,268,7,332, 1265,300,8,332, 1325,272,8,332, 1338,272,8,332, 1398,225,8,328, 1438,218,8,300, 1470,238,12,262, 1495,195,10,262, 1528,218,7,324, 1549,252,12,322, 28,460,9,420, 75,415,10,400, 178,410,8,400, 286,412,7,390, 330,345,8,330, 370,335,7,315, 487,345,8,320, 569,420,9,380, 605,405,9,382, 652,390,8,372, 710,405,10,388, 785,400,9,372, 832,435,9,396, 915,420,9,390, 963,392,8,358, 1015,378,7,356, 1096,380,7,350, 1160,350,8,335, 1228,365,8,338, 1285,362,8,338, 1366,358,8,338, 1417,350,8,335, 1515,358,9,332, 1566,350,8,328]],
  [1420, 0, [14,420,7,475, 32,452,8,475, 72,518,8,543, 92,480,8,520, 108,490,10,512, 147,415,10,512, 178,490,8,520, 212,497,14,528, 237,495,10,522, 264,452,7,545, 280,510,10,530, 305,545,16,575, 322,550,10,575, 357,365,6,450, 428,365,12,390, 88,565,7,543, 138,545,7,520, 262,590,10,560, 296,600,9,575, 345,640,14,600, 337,640,10,600, 353,635,5,560]],
];
const bandPath = spikes.map(([ox, tall, s]) => {
  let d = '';
  const oy = tall ? 900 : 780;
  const sy = tall ? 0.33333 : 0.45153;
  for (let i = 0; i < s.length; i += 4) {
    const x = ox + s[i] * SX, y = oy + s[i + 1] * sy, r = s[i + 2] * SX, b = oy + s[i + 3] * sy;
    d += `M${x - r} ${b}L${x} ${y}L${x + r} ${b}z`;
  }
  return d;
}).join('');

const ticks: [number, string][] = [
  [223, '7:10pm'], [333, '7:20pm'], [442, '7:30pm'], [552, '7:40pm'], [661, '7:50pm'], [771, '8:00pm'],
  [880, '8:10pm'], [989, '8:20pm'], [1099, '8:30pm'], [1208, '8:40pm'], [1318, '8:50pm'], [1427, '9:00pm'], [1537, '9:10pm'],
];
const levels: [number, string][] = [[964, '0'], [1064, '-20'], [1163, '-40']];

const Chart = () => (
  <ChartCanvas viewBox="110 918 1520 410">
    <g stroke="rgba(16,22,26,.075)" strokeWidth="4">
      {ticks.map(([x]) => <line key={x} x1={x} x2={x} y1="918" y2="1248" />)}
      {levels.map(([y]) => <line key={y} x1="114" x2="1626" y1={y} y2={y} />)}
    </g>
    <path d={bandPath} fill="#dbe0e4" />
    <g>
      {levels.map(([y, t]) => <text key={t} x="163" y={y + 8} textAnchor="end">{t}</text>)}
      {ticks.map(([x, t]) => <text key={t} x={x} y="1278" textAnchor="middle">{t}</text>)}
      <DateText x="223" y="1314" textAnchor="middle">12/31/69</DateText>
    </g>
    <path d={linePath} fill="none" stroke="#95b639" strokeWidth="4" strokeLinejoin="round" />
  </ChartCanvas>
);

/* ---------- settings ---------- */

const Settings = styled.div`
  display: flex;
  flex-direction: column;
  width: 478px;
  padding: 26px 18px 0 20px;
  background: #f4f8fb;
`;

const Field = styled.div`
  display: flex;
  flex-direction: column;
  gap: 16px;
  height: 142px;
`;

const Control = styled.div`
  display: flex;
  align-items: center;
  height: 60px;
  width: 438px;
  border: 2px solid #c8cdd1;
  border-bottom-color: #b1b8be;
  border-radius: 6px;
  background: linear-gradient(#fff, #f4f7f9);
  overflow: hidden;
`;

const TextControl = styled(Control)`
  gap: 14px;
  padding: 0 13px 0 19px;
`;

const SelectControl = styled(Control)`
  justify-content: space-between;
  padding: 0 12px 0 19px;
`;

const TypeBadge = styled.span`
  font-size: 21px;
  font-weight: 400;
  letter-spacing: -1.4px;
  color: #5c7080;
`;

const ColorSwatch = styled.div`
  align-self: stretch;
  width: 60px;
  margin: -2px 0 -2px -2px;
  border: 2px solid rgba(16, 22, 26, 0.18);
  border-right-color: #c8cdd1;
  border-bottom-color: #7d9a31;
  border-radius: 6px 0 0 6px;
  background: linear-gradient(#e6eecb, #9bbf30);
  background-clip: padding-box;
  background-color: #dbe5bf;
`;

const ColorValue = styled.div`
  flex: 1;
  text-align: center;
`;

const CheckRow = styled.div`
  display: flex;
  align-items: center;
  gap: 20px;
  padding-top: 12px;
`;

const Checkbox = styled.div`
  display: flex;
  align-items: center;
  justify-content: center;
  width: 32px;
  height: 32px;
  border: 2px solid #1e5b85;
  border-radius: 6px;
  background: linear-gradient(#2f8bc8, #2079b6);
`;

const Scrollbar = styled.div`
  width: 20px;
  background: #f7f9fb;
  border-left: 2px solid #d0d5da;
`;

const Thumb = styled.div`
  height: 366px;
  background: #cdd1d4;
`;

export default function App() {
  const chrome = '#a7b6c2';
  const muted = '#9aa7b2';
  return (
    <>
      <GlobalStyle />
      <Frame>
        <Sidebar>
          <HomeCell><Icon name="home" color="#738694" /></HomeCell>
          <SidebarGap />
          <NavCell><NavIcon name="satellite" color="#8a9ba8" /></NavCell>
          <NavCell $active><NavIcon name="gauge" color="#394b59" /></NavCell>
          <NavCell><NavIcon name="area" color="#8a9ba8" /></NavCell>
          <NavCell><NavIcon name="feed" color="#8a9ba8" /></NavCell>
          <NavEnd />
          <Expand><Icon name="right" color="#8a9ba8" /></Expand>
        </Sidebar>

        <Main>
          <TopBar>
            <Tab>
              <NavIcon name="satellite" size={28} />
              <Label $color="#5c7080" $ls={0.55}>Data Sources</Label>
              <Icon name="cross" color="#9fb0bf" />
            </Tab>
            <Tab>
              <NavIcon name="feed" size={28} />
              <Label $color="#5c7080" $ls={0.7}>Feed</Label>
              <Icon name="cross" color="#9fb0bf" />
            </Tab>
            <Tab>
              <NavIcon name="area" size={28} />
              <Label $color="#5c7080">Visualizations</Label>
              <Icon name="cross" color="#9fb0bf" />
            </Tab>
            <ActiveTab>
              <NavIcon name="layout" color="#10161a" size={28} />
              <ActiveTabTitle><Label $color="#10161a" $ls={0.35}>Combined View</Label></ActiveTabTitle>
              <ActiveTabActions>
                <Icon name="more" opacity={0.6} />
                <Icon name="cross" opacity={0.45} />
              </ActiveTabActions>
            </ActiveTab>
            <HistoryActions>
              <Icon name="arrowLeft" color={chrome} />
              <Icon name="arrowRight" color={chrome} />
              <Icon name="bookmark" color={chrome} />
            </HistoryActions>
            <UserActions>
              <Feedback>
                <Icon name="chat" color="#738694" />
                <Label $color="#8a969f" $ls={0.55}>Feedback?</Label>
              </Feedback>
              <Icon name="inbox" color={chrome} />
              <Icon name="help" color={chrome} />
              <Icon name="person" color={chrome} />
            </UserActions>
          </TopBar>

          <Panels>
            <Panel $h={686}>
              <PanelHeader>
                <Label $w={700} $ls={0.7} $color="#30404d">Visualization</Label>
                <Group $gap={26}><Icon name="more" /><Icon name="cross" /></Group>
              </PanelHeader>
              <Toolbar>
                <ToolButton><Icon name="edit" /><Label>Edit</Label></ToolButton>
                <ToolButton $end><Icon name="stopwatch" /><Label $ls={0.85}>Time Scrubber</Label></ToolButton>
              </Toolbar>
              <Scrubber>
                <ScrubberTop>
                  <Group $gap={14}><Label $color={muted} $ls={0.65}>First Value</Label><Icon name="caret" color={muted} /></Group>
                  <Clock $gap={31}>
                    <Label $color="#333" $ls={0.6}>2020/08/25 21:42:41:682</Label>
                    <Icon name="play" />
                    <Icon name="cog" />
                  </Clock>
                  <ScrubberEnd $gap={14}><Label $color={muted} $ls={0.4}>Last Value</Label><Icon name="caret" color={muted} /></ScrubberEnd>
                </ScrubberTop>
                <ScrubberTrack>
                  <Group $gap={18}><Icon name="first" /><Icon name="left" /></Group>
                  <Track><TrackFill /><Handle /></Track>
                  <Group $gap={14}><Icon name="right" /><Icon name="last" /></Group>
                </ScrubberTrack>
              </Scrubber>
              <MapBox>
                <City />
                <ZoomControl>
                  <ZoomButton $divided>
                    <Svg viewBox="0 0 22 22" $size={22} $color="#000"><path d="M1 9h20v4H1zM9 1h4v20H9z" /></Svg>
                  </ZoomButton>
                  <ZoomButton>
                    <Svg viewBox="0 0 22 22" $size={22} $color="#000"><path d="M1 9h20v4H1z" /></Svg>
                  </ZoomButton>
                </ZoomControl>
              </MapBox>
            </Panel>

            <Panel $h={684}>
              <PanelHeader>
                <Label $w={700} $ls={0.7} $color="#30404d">Visualization</Label>
                <Group $gap={26}><Icon name="more" /><Icon name="cross" /></Group>
              </PanelHeader>
              <Toolbar>
                <ToolButton><Icon name="cross" /><Label>Cancel</Label></ToolButton>
                <ToolButton><Icon name="tick" /><Label $ls={0.65}>Confirm</Label></ToolButton>
                <ToolButton $end><Icon name="stopwatch" /><Label $ls={0.85}>Time Scrubber</Label></ToolButton>
              </Toolbar>
              <ChartBody>
                <ChartPane>
                  <Chart />
                  <Legend>
                    <LegendItem $w={154}><Label $w={700} $color="#333">Time:</Label><Label $color="#333" $ls={3}>--</Label></LegendItem>
                    <LegendItem $w={314}>
                      <LegendKey><Swatch $line /><Label $w={700} $color="#333" $ls={0.65}>Dimension 128:</Label></LegendKey>
                      <Label $color="#333" $ls={3}>--</Label>
                    </LegendItem>
                    <LegendItem $w={380}>
                      <LegendKey><Swatch /><Label $w={700} $color="#333" $ls={0.45}>Dimension 128 (Min):</Label></LegendKey>
                      <Label $color="#333" $ls={3}>--</Label>
                    </LegendItem>
                    <LegendItem $w={380}>
                      <LegendKey><Swatch /><Label $w={700} $color="#333" $ls={0.5}>Dimension 128 (Max):</Label></LegendKey>
                      <Label $color="#333" $ls={3}>--</Label>
                    </LegendItem>
                  </Legend>
                </ChartPane>
                <Settings>
                  <Field>
                    <Label $color="#333">Y-Axis</Label>
                    <TextControl><TypeBadge>123</TypeBadge><Label $ls={0.95}>battery.current</Label></TextControl>
                  </Field>
                  <Field>
                    <Label $color="#333" $ls={0.8}>Graph Style</Label>
                    <SelectControl><Label $ls={0.9}>line</Label><Icon name="caret" /></SelectControl>
                  </Field>
                  <Field>
                    <Label $color="#333" $ls={0.5}>Color</Label>
                    <Control><ColorSwatch /><ColorValue><Label $ls={0.2}>#9bbf30</Label></ColorValue></Control>
                  </Field>
                  <CheckRow>
                    <Checkbox>
                      <Svg viewBox="0 0 16 16" $size={32} $color="#fff"><path d="M12 5c-.28 0-.53.11-.71.29L7 9.590l-2.290-2.300a1.003 1.003 0 00-1.420 1.420l3 3c.18.18.43.29.71.29s.53-.11.71-.29l5-5A1.003 1.003 0 0012 5z" /></Svg>
                    </Checkbox>
                    <Label $color="#333" $ls={0.25}>Auto Scale Y Axis</Label>
                  </CheckRow>
                </Settings>
                <Scrollbar><Thumb /></Scrollbar>
              </ChartBody>
            </Panel>
          </Panels>
        </Main>
      </Frame>
    </>
  );
}
